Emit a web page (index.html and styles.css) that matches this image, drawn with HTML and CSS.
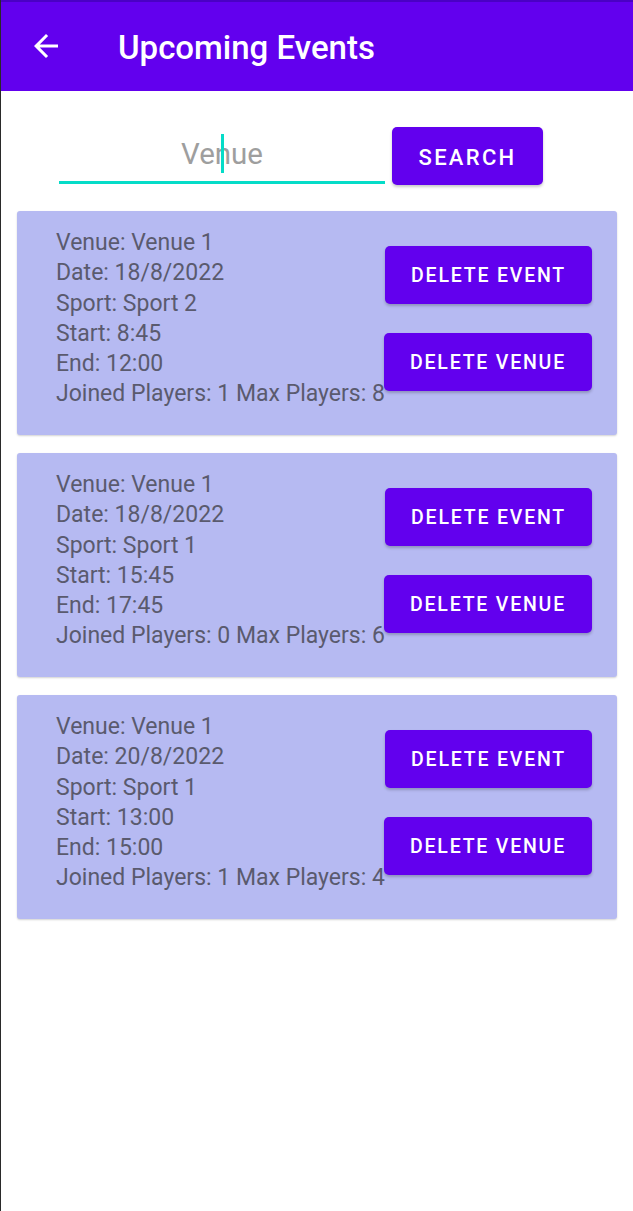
FILE: index.html
```html
<!DOCTYPE html>
<html>
<head>
<meta charset="utf-8">
<link rel="stylesheet" href="styles.css">
</head>
<body>
<div class="screen">
  <header class="appbar">
    <svg class="back" viewBox="0 0 24 24" width="36" height="36"><path fill="#fff" d="M20 11H7.83l5.59-5.59L12 4l-8 8 8 8 1.41-1.41L7.83 13H20v-2z"/></svg>
    <h1 class="title">Upcoming Events</h1>
  </header>
  <div class="search-row">
    <div class="input">
      <span class="hint">Ve<span class="cursor"></span>nue</span>
    </div>
    <button class="btn btn-search">SEARCH</button>
  </div>
  <div class="list">
    <div class="card">
      <div class="info">
        <div>Venue: Venue 1</div>
        <div>Date: 18/8/2022</div>
        <div>Sport: Sport 2</div>
        <div>Start: 8:45</div>
        <div>End: 12:00</div>
        <div class="nowrap">Joined Players: 1 Max Players: 8</div>
      </div>
      <div class="actions">
        <button class="btn btn-del">DELETE EVENT</button>
        <button class="btn btn-del">DELETE VENUE</button>
      </div>
    </div>
    <div class="card">
      <div class="info">
        <div>Venue: Venue 1</div>
        <div>Date: 18/8/2022</div>
        <div>Sport: Sport 1</div>
        <div>Start: 15:45</div>
        <div>End: 17:45</div>
        <div class="nowrap">Joined Players: 0 Max Players: 6</div>
      </div>
      <div class="actions">
        <button class="btn btn-del">DELETE EVENT</button>
        <button class="btn btn-del">DELETE VENUE</button>
      </div>
    </div>
    <div class="card">
      <div class="info">
        <div>Venue: Venue 1</div>
        <div>Date: 20/8/2022</div>
        <div>Sport: Sport 1</div>
        <div>Start: 13:00</div>
        <div>End: 15:00</div>
        <div class="nowrap">Joined Players: 1 Max Players: 4</div>
      </div>
      <div class="actions">
        <button class="btn btn-del">DELETE EVENT</button>
        <button class="btn btn-del">DELETE VENUE</button>
      </div>
    </div>
  </div>
</div>
</body>
</html>
```
FILE: styles.css
```css
html, body {
  margin: 0;
  padding: 0;
  background: #fff;
}
body {
  font-family: Roboto, "Liberation Sans", sans-serif;
}
.screen {
  width: 633px;
  height: 1211px;
  box-sizing: border-box;
  border-left: 1px solid #2a2a2a;
  background: #fff;
  overflow: hidden;
}
.appbar {
  height: 91px;
  box-sizing: border-box;
  background: #6200ee;
  border-top: 2px solid #4a00c4;
  display: flex;
  align-items: center;
  padding-left: 27px;
}
.back {
  display: block;
  margin-top: -1px;
}
.title {
  margin: 0 0 0 54px;
  color: #fff;
  font-size: 33px;
  font-weight: 500;
  letter-spacing: 0;
  margin-top: 2px;
}
.search-row {
  display: flex;
  align-items: flex-start;
  padding-left: 58px;
  margin-top: 36px;
  gap: 7px;
}
.input {
  width: 326px;
  height: 57px;
  box-sizing: border-box;
  border-bottom: 3px solid #05dcc8;
  display: flex;
  justify-content: center;
  align-items: center;
}
.hint {
  position: relative;
  color: #9e9e9e;
  font-size: 29.5px;
  margin-top: 0;
}
.cursor {
  position: absolute;
  left: 40px;
  top: -3px;
  width: 3px;
  height: 39px;
  background: #05dcc8;
}
.btn {
  font-family: Roboto, "Liberation Sans", sans-serif;
  background: #6200ee;
  color: #fff;
  border: none;
  border-radius: 5px;
  font-weight: 500;
  box-shadow: 0 2px 3px rgba(0, 0, 0, 0.22);
  padding: 0;
  white-space: nowrap;
  cursor: pointer;
}
.btn-search {
  width: 151px;
  height: 58px;
  font-size: 22px;
  letter-spacing: 2.3px;
  padding-top: 2px;
}
.list {
  display: flex;
  flex-direction: column;
  gap: 18px;
  padding: 26px 16px 0 16px;
}
.card {
  height: 224px;
  box-sizing: border-box;
  background: #b6baf2;
  border-radius: 3px;
  box-shadow: 0 1px 2px rgba(0, 0, 0, 0.18);
  display: flex;
  justify-content: space-between;
  align-items: flex-start;
  padding: 17px 25px 0 39px;
}
.info {
  color: #5a5a6e;
  font-size: 23px;
  line-height: 30.3px;
  min-width: 0;
}
.nowrap {
  white-space: nowrap;
}
.actions {
  flex-shrink: 0;
  display: flex;
  flex-direction: column;
  align-items: flex-end;
  gap: 29px;
  padding-top: 18px;
}
.btn-del {
  height: 58px;
  padding: 0 26px;
  font-size: 19.5px;
  letter-spacing: 1.8px;
  padding-top: 1px;
}
```
